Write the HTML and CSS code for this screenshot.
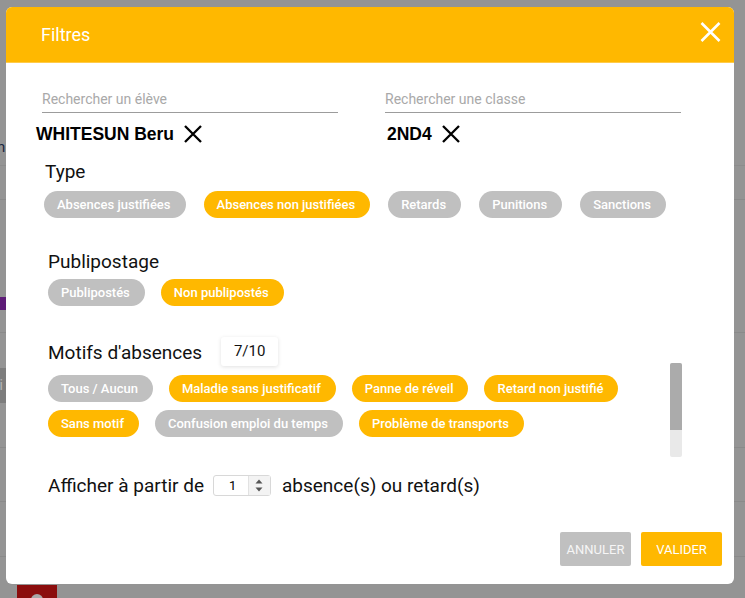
FILE: index.html
```html
<!DOCTYPE html>
<html lang="fr">
<head>
<meta charset="utf-8">
<title>Filtres</title>
<link rel="stylesheet" href="styles.css">
</head>
<body>
<div class="page">
  <div class="row row-a"><span class="row-text">n</span></div>
  <div class="row row-b"></div>
  <div class="row row-c"><div class="purple-bar"></div></div>
  <div class="row row-d"><div class="dark-block">li</div></div>
  <div class="row row-e"></div>
  <div class="row row-f"></div>
  <div class="row row-g"></div>
  <div class="row row-h"><div class="avatar"></div><span class="row-name">Lucas Bastille</span></div>
</div>

<div class="modal">
  <header class="modal-header">
    <h2 class="modal-title">Filtres</h2>
    <button class="close-btn" aria-label="Fermer">
      <svg width="21" height="20" viewBox="0 0 21 20"><path d="M1.5 1 L19.5 19 M19.5 1 L1.5 19" stroke="#fff" stroke-width="2.6" fill="none"/></svg>
    </button>
  </header>

  <div class="modal-body">
    <div class="search-row">
      <div class="search-col col-eleve">
        <div class="field">Rechercher un élève</div>
        <div class="selected"><span>WHITESUN Beru</span>
          <svg class="x-icon" width="18" height="18" viewBox="0 0 18 18"><path d="M1 1 L17 17 M17 1 L1 17" stroke="#000" stroke-width="2.3" fill="none"/></svg>
        </div>
      </div>
      <div class="search-col col-classe">
        <div class="field">Rechercher une classe</div>
        <div class="selected"><span>2ND4</span>
          <svg class="x-icon" width="18" height="18" viewBox="0 0 18 18"><path d="M1 1 L17 17 M17 1 L1 17" stroke="#000" stroke-width="2.3" fill="none"/></svg>
        </div>
      </div>
    </div>

    <section class="group group-type">
      <h3 class="group-title">Type</h3>
      <div class="chips">
        <span class="chip">Absences justifiées</span>
        <span class="chip on">Absences non justifiées</span>
        <span class="chip">Retards</span>
        <span class="chip">Punitions</span>
        <span class="chip">Sanctions</span>
      </div>
    </section>

    <section class="group group-publi">
      <h3 class="group-title">Publipostage</h3>
      <div class="chips">
        <span class="chip">Publipostés</span>
        <span class="chip on">Non publipostés</span>
      </div>
    </section>

    <section class="group group-motifs">
      <div class="motifs-head">
        <h3 class="group-title">Motifs d'absences</h3>
        <span class="count-badge">7/10</span>
      </div>
      <div class="scroll-wrap">
        <div class="chips chips-scroll">
          <span class="chip">Tous / Aucun</span>
          <span class="chip on">Maladie sans justificatif</span>
          <span class="chip on">Panne de réveil</span>
          <span class="chip on">Retard non justifié</span>
          <span class="chip on">Sans motif</span>
          <span class="chip">Confusion emploi du temps</span>
          <span class="chip on">Problème de transports</span>
        </div>
        <div class="scrollbar"><div class="thumb"></div></div>
      </div>
    </section>

    <div class="threshold">
      <span>Afficher à partir de</span>
      <div class="num-input">
        <span class="num-value">1</span>
        <span class="spinner">
          <svg width="8" height="5" viewBox="0 0 8 5"><path d="M4 0.5 L7.5 4.5 L0.5 4.5 Z" fill="#555"/></svg>
          <svg width="8" height="5" viewBox="0 0 8 5"><path d="M0.5 0.5 L7.5 0.5 L4 4.5 Z" fill="#555"/></svg>
        </span>
      </div>
      <span>absence(s) ou retard(s)</span>
    </div>
  </div>

  <footer class="modal-footer">
    <button class="btn btn-cancel">ANNULER</button>
    <button class="btn btn-ok">VALIDER</button>
  </footer>
</div>
</body>
</html>
```

FILE: styles.css
```css
html, body {
  margin: 0;
  padding: 0;
}

body {
  width: 745px;
  height: 598px;
  overflow: hidden;
  background: #949494;
  font-family: Roboto, "Noto Sans", sans-serif;
  position: relative;
}

/* underlying page (dimmed) */
.page {
  display: flex;
  flex-direction: column;
}

.row {
  box-sizing: border-box;
  border-bottom: 1px solid #8a8a8a;
  display: flex;
  flex-direction: column;
}

.row-a { height: 166px; border-bottom-color: #8c8c8c; }
.row-a .row-text {
  margin-top: 138px;
  font-size: 15px;
  color: #1a2640;
  margin-left: -3px;
}
.row-b { height: 34px; }
.row-c { height: 133px; }
.purple-bar {
  margin-top: 97px;
  height: 13px;
  width: 200px;
  background: #5e1c78;
}
.row-d { height: 115px; }
.dark-block {
  margin-top: 35px;
  height: 35px;
  width: 200px;
  background: #7d7d7d;
  color: #b5b5b5;
  font-size: 14px;
  line-height: 35px;
  text-indent: -4px;
}
.row-e { height: 54px; }
.row-f { height: 55px; }
.row-g { height: 28px; border-bottom: none; }
.row-h {
  height: 40px;
  flex-direction: row;
  align-items: flex-start;
  border-bottom: none;
}
.avatar {
  margin-left: 17px;
  width: 40px;
  height: 40px;
  background: #8b0d0d;
  position: relative;
}
.avatar::after {
  content: "";
  position: absolute;
  left: 14px;
  top: 9px;
  width: 12px;
  height: 12px;
  border-radius: 50%;
  background: #a8a8a8;
}
.row-name {
  margin-left: 155px;
  margin-top: 10px;
  font-size: 16px;
  color: #222;
}

/* modal */
.modal {
  position: absolute;
  left: 6px;
  top: 7px;
  width: 728px;
  height: 577px;
  background: #fff;
  border-radius: 6px;
  overflow: hidden;
  display: flex;
  flex-direction: column;
}

.modal-header {
  height: 56px;
  flex: none;
  background: #ffb800;
  display: flex;
  align-items: center;
  justify-content: space-between;
  padding: 0 13px 0 35px;
  box-sizing: border-box;
  border-bottom: 1px solid #ffcb4a;
}

.modal-title {
  margin: 0;
  font-size: 18px;
  font-weight: 400;
  color: #fff;
  line-height: 22px;
  padding-top: 1px;
}

.close-btn {
  border: none;
  background: none;
  padding: 0;
  width: 21px;
  height: 20px;
  margin-top: -5px;
  display: flex;
}

.modal-body {
  flex: 1;
  padding: 26px 52px 0 42px;
  display: flex;
  flex-direction: column;
}

/* search */
.search-row {
  display: flex;
  gap: 47px;
  margin-left: -12px;
}

.search-col {
  display: flex;
  flex-direction: column;
}

.col-eleve { width: 302px; }
.col-classe { width: 296px; }

.col-eleve .field { margin-left: 6px; }
.col-classe .selected { margin-left: 2px; }

.field {
  font-size: 14px;
  line-height: 20px;
  color: #a9a9a9;
  padding-bottom: 3px;
  border-bottom: 1px solid #9c9c9c;
}

.selected {
  margin-top: 10px;
  height: 22px;
  display: flex;
  align-items: center;
  gap: 10px;
  font-family: "Liberation Sans", Arial, sans-serif;
  font-weight: 700;
  font-size: 17.5px;
  color: #000;
}

.x-icon { flex: none; }

/* groups */
.group-title {
  margin: 0;
  font-size: 19px;
  line-height: 22px;
  font-weight: 400;
  color: #111;
}

.chips {
  display: flex;
  flex-wrap: wrap;
  column-gap: 16px;
  row-gap: 8px;
}

.chip {
  height: 27px;
  line-height: 27px;
  border-radius: 14px;
  padding: 0 15px 0 13px;
  background: #c0c0c0;
  color: #fff;
  font-size: 13px;
  font-weight: 500;
  white-space: nowrap;
}

.chip.on {
  background: #ffb800;
}

.group-type {
  margin-top: 16px;
  margin-left: -4px;
}
.group-type .group-title { margin-left: 1px; }
.group-type .chips {
  margin-top: 8px;
  column-gap: 18px;
}

.group-publi {
  margin-top: 33px;
}
.group-publi .chips {
  margin-top: 6px;
}

.group-motifs {
  margin-top: 36px;
}

.motifs-head {
  display: flex;
  align-items: flex-start;
  height: 21px;
  gap: 19px;
}

.count-badge {
  margin-top: -5px;
  height: 29px;
  line-height: 29px;
  width: 57px;
  text-align: center;
  font-size: 15px;
  color: #111;
  background: #fff;
  border-radius: 3px;
  box-shadow: 0 1px 4px rgba(0, 0, 0, 0.12);
  position: relative;
  z-index: 1;
}

.scroll-wrap {
  display: flex;
  height: 94px;
}

.chips-scroll {
  flex: 1;
  padding-top: 12px;
  align-content: flex-start;
  column-gap: 16px;
  row-gap: 8px;
  overflow: hidden;
}

.scrollbar {
  width: 12px;
  flex: none;
  background: #e9e9e9;
  border-radius: 2px;
  overflow: hidden;
}

.thumb {
  height: 67px;
  background: #ababab;
}

/* threshold */
.threshold {
  margin-top: 17px;
  display: flex;
  align-items: center;
  height: 22px;
  font-size: 19px;
  color: #111;
}

.num-input {
  margin: 0 11px 0 9px;
  width: 58px;
  height: 21px;
  box-sizing: border-box;
  border: 1px solid #d8d8d8;
  border-radius: 3px;
  display: flex;
  align-items: center;
}

.num-value {
  flex: 1;
  font-size: 13px;
  padding-left: 15px;
  color: #000;
}

.spinner {
  width: 21px;
  height: 19px;
  border-left: 1px solid #e2e2e2;
  background: #f3f3f3;
  display: flex;
  flex-direction: column;
  align-items: center;
  justify-content: center;
  gap: 3px;
}

.spinner svg { display: block; }

/* footer */
.modal-footer {
  flex: none;
  display: flex;
  justify-content: flex-end;
  gap: 10px;
  padding: 0 12px 18px 0;
}

.btn {
  height: 34px;
  border: none;
  border-radius: 2px;
  font-family: Roboto, sans-serif;
  font-size: 13px;
  color: #fff;
  padding: 0;
}

.btn-cancel {
  width: 71px;
  background: #c0c0c0;
  color: #f6f6f6;
}

.btn-ok {
  width: 81px;
  background: #ffb800;
}
```
